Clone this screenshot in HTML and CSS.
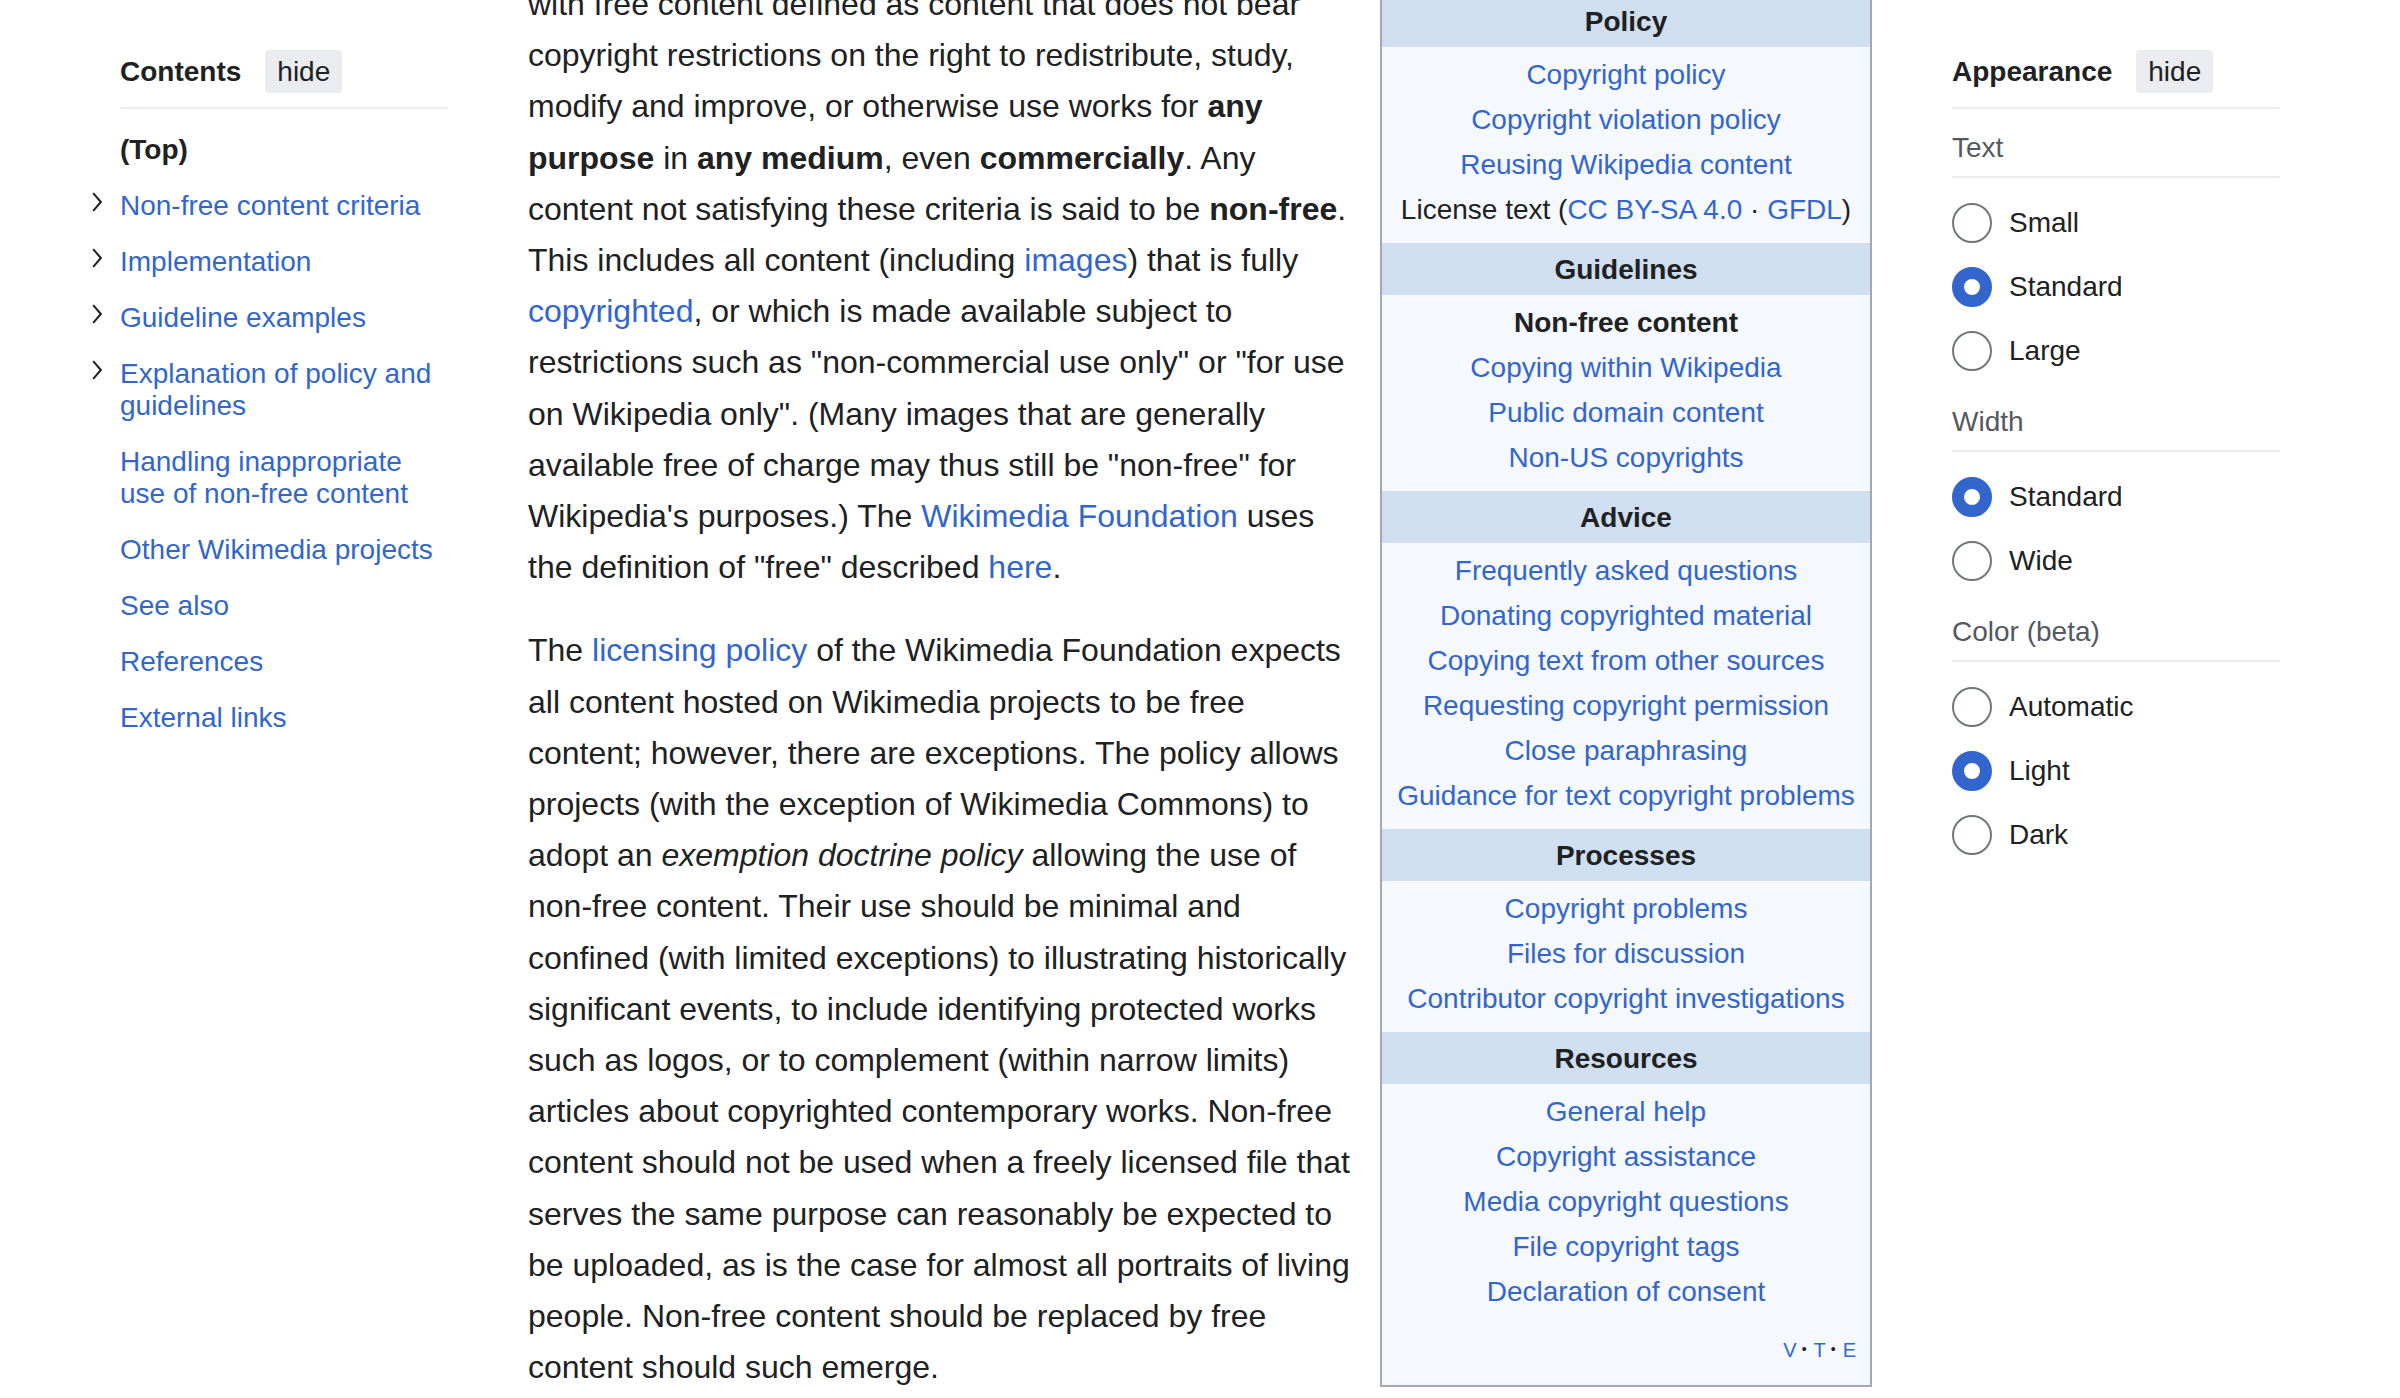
FILE: index.html
```html
<!DOCTYPE html>
<html lang="en">
<head>
<meta charset="utf-8">
<title>Non-free content</title>
<link rel="stylesheet" href="styles.css">
</head>
<body>
<div class="page">
  <nav class="toc">
    <div class="panel-head">
      <span class="panel-title">Contents</span>
      <button class="hide-btn">hide</button>
    </div>
    <ul class="toc-list">
      <li class="toc-item toc-top">(Top)</li>
      <li class="toc-item has-toggle"><span class="toc-toggle"><svg width="10" height="20" viewBox="0 0 10 20"><polyline points="1.2,1.2 8.8,10 1.2,18.8" fill="none" stroke="#202122" stroke-width="2"/></svg></span><a href="#">Non-free content criteria</a></li>
      <li class="toc-item has-toggle"><span class="toc-toggle"><svg width="10" height="20" viewBox="0 0 10 20"><polyline points="1.2,1.2 8.8,10 1.2,18.8" fill="none" stroke="#202122" stroke-width="2"/></svg></span><a href="#">Implementation</a></li>
      <li class="toc-item has-toggle"><span class="toc-toggle"><svg width="10" height="20" viewBox="0 0 10 20"><polyline points="1.2,1.2 8.8,10 1.2,18.8" fill="none" stroke="#202122" stroke-width="2"/></svg></span><a href="#">Guideline examples</a></li>
      <li class="toc-item has-toggle"><span class="toc-toggle"><svg width="10" height="20" viewBox="0 0 10 20"><polyline points="1.2,1.2 8.8,10 1.2,18.8" fill="none" stroke="#202122" stroke-width="2"/></svg></span><a href="#">Explanation of policy and guidelines</a></li>
      <li class="toc-item"><a href="#">Handling inappropriate use of non-free content</a></li>
      <li class="toc-item"><a href="#">Other Wikimedia projects</a></li>
      <li class="toc-item"><a href="#">See also</a></li>
      <li class="toc-item"><a href="#">References</a></li>
      <li class="toc-item"><a href="#">External links</a></li>
    </ul>
  </nav>

  <main class="content">
    <div class="article">
      <p>with free content defined as content that does not bear copyright restrictions on the right to redistribute, study, modify and improve, or otherwise use works for <b>any purpose</b> in <b>any medium</b>, even <b>commercially</b>. Any content not satisfying these criteria is said to be <b>non-free</b>. This includes all content (including <a href="#">images</a>) that is fully <a href="#">copyrighted</a>, or which is made available subject to restrictions such as "non-commercial use only" or "for use on Wikipedia only". (Many images that are generally available free of charge may thus still be "non-free" for Wikipedia's purposes.) The <a href="#">Wikimedia Foundation</a> uses the definition of "free" described <a href="#">here</a>.</p>
      <p>The <a href="#">licensing policy</a> of the Wikimedia Foundation expects all content hosted on Wikimedia projects to be free content; however, there are exceptions. The policy allows projects (with the exception of Wikimedia Commons) to adopt an <i>exemption doctrine policy</i> allowing the use of non-free content. Their use should be minimal and confined (with limited exceptions) to illustrating historically significant events, to include identifying protected works such as logos, or to complement (within narrow limits) articles about copyrighted contemporary works. Non-free content should not be used when a freely licensed file that serves the same purpose can reasonably be expected to be uploaded, as is the case for almost all portraits of living people. Non-free content should be replaced by free content should such emerge.</p>
    </div>

    <aside class="sidebar">
      <div class="sb-head">Policy</div>
      <div class="sb-body">
        <div><a href="#">Copyright policy</a></div>
        <div><a href="#">Copyright violation policy</a></div>
        <div><a href="#">Reusing Wikipedia content</a></div>
        <div>License text (<a href="#">CC BY-SA 4.0</a> · <a href="#">GFDL</a>)</div>
      </div>
      <div class="sb-head">Guidelines</div>
      <div class="sb-body">
        <div class="sb-sub">Non-free content</div>
        <div><a href="#">Copying within Wikipedia</a></div>
        <div><a href="#">Public domain content</a></div>
        <div><a href="#">Non-US copyrights</a></div>
      </div>
      <div class="sb-head">Advice</div>
      <div class="sb-body">
        <div><a href="#">Frequently asked questions</a></div>
        <div><a href="#">Donating copyrighted material</a></div>
        <div><a href="#">Copying text from other sources</a></div>
        <div><a href="#">Requesting copyright permission</a></div>
        <div><a href="#">Close paraphrasing</a></div>
        <div><a href="#">Guidance for text copyright problems</a></div>
      </div>
      <div class="sb-head">Processes</div>
      <div class="sb-body">
        <div><a href="#">Copyright problems</a></div>
        <div><a href="#">Files for discussion</a></div>
        <div><a href="#">Contributor copyright investigations</a></div>
      </div>
      <div class="sb-head">Resources</div>
      <div class="sb-body">
        <div><a href="#">General help</a></div>
        <div><a href="#">Copyright assistance</a></div>
        <div><a href="#">Media copyright questions</a></div>
        <div><a href="#">File copyright tags</a></div>
        <div><a href="#">Declaration of consent</a></div>
      </div>
      <div class="sb-vte"><a href="#">V</a><span class="vte-dot">•</span><a href="#">T</a><span class="vte-dot">•</span><a href="#">E</a></div>
    </aside>
  </main>

  <aside class="appearance">
    <div class="panel-head">
      <span class="panel-title">Appearance</span>
      <button class="hide-btn">hide</button>
    </div>
    <div class="ap-label">Text</div>
    <ul class="ap-options">
      <li class="ap-opt"><span class="radio"></span>Small</li>
      <li class="ap-opt"><span class="radio checked"></span>Standard</li>
      <li class="ap-opt"><span class="radio"></span>Large</li>
    </ul>
    <div class="ap-label">Width</div>
    <ul class="ap-options">
      <li class="ap-opt"><span class="radio checked"></span>Standard</li>
      <li class="ap-opt"><span class="radio"></span>Wide</li>
    </ul>
    <div class="ap-label">Color (beta)</div>
    <ul class="ap-options">
      <li class="ap-opt"><span class="radio"></span>Automatic</li>
      <li class="ap-opt"><span class="radio checked"></span>Light</li>
      <li class="ap-opt"><span class="radio"></span>Dark</li>
    </ul>
  </aside>
</div>
</body>
</html>
```

FILE: styles.css
```css
html, body {
  margin: 0;
  padding: 0;
  height: 100%;
  overflow: hidden;
  background: #ffffff;
}

body {
  font-family: "Liberation Sans", Arial, Helvetica, sans-serif;
  color: #202122;
}

a {
  color: #3366cc;
  text-decoration: none;
}

ul {
  list-style: none;
  margin: 0;
  padding: 0;
}

.page {
  display: flex;
  align-items: flex-start;
  gap: 80px;
  padding: 0 120px;
}

/* ---------- side panels ---------- */
.toc,
.appearance {
  width: 328px;
  flex: 0 0 328px;
  padding-top: 50px;
  font-size: 28px;
}

.panel-head {
  display: flex;
  align-items: center;
  gap: 24px;
  height: 43px;
  padding-bottom: 14px;
  border-bottom: 2px solid #eaecf0;
}

.panel-title {
  font-weight: 700;
  font-size: 28px;
}

.hide-btn {
  font-family: "Liberation Sans", Arial, Helvetica, sans-serif;
  font-size: 28px;
  color: #202122;
  background: #eaecf0;
  border: none;
  border-radius: 4px;
  height: 43px;
  line-height: 43px;
  padding: 0 12px;
}

/* ---------- table of contents ---------- */
.toc-list {
  padding-top: 13px;
}

.toc-item {
  display: flex;
  align-items: flex-start;
  padding: 12px 0;
  line-height: 32px;
}

.toc-top {
  font-weight: 700;
}

.toc-item.has-toggle {
  margin-left: -28px;
}

.toc-toggle {
  flex: 0 0 28px;
  height: 32px;
  display: flex;
  align-items: flex-start;
  padding-top: 2px;
  box-sizing: border-box;
}

.toc-toggle svg {
  display: block;
}

/* ---------- main content ---------- */
.content {
  width: 1344px;
  flex: 0 0 1344px;
  display: flex;
  justify-content: space-between;
  align-items: flex-start;
}

.article {
  width: 830px;
  margin-top: -21px;
  font-size: 32px;
  line-height: 51.2px;
}

.article p {
  margin: 0 0 32px;
}

/* ---------- copyright sidebar ---------- */
.sidebar {
  width: 492px;
  box-sizing: border-box;
  margin-top: -7px;
  border: 2px solid #a2a9b1;
  background: #f5f8fd;
  font-size: 28px;
  text-align: center;
}

.sb-head {
  background: #cfdff0;
  font-weight: 700;
  line-height: 45px;
  padding: 3.5px 0;
}

.sb-body {
  padding: 5px 0 11px;
  line-height: 45px;
}

.sb-sub {
  font-weight: 700;
}

.sb-vte {
  text-align: right;
  font-size: 20px;
  line-height: 20px;
  padding: 15px 14px 23px;
}

.vte-dot {
  font-size: 14px;
  margin: 0 7px 0 5px;
  position: relative;
  top: -3px;
}

/* ---------- appearance panel ---------- */
.ap-label {
  color: #54595d;
  line-height: 44px;
  padding: 17px 0 6px;
  border-bottom: 2px solid #eaecf0;
}

.ap-options {
  padding-top: 13px;
}

.ap-opt {
  display: flex;
  align-items: center;
  height: 64px;
  color: #202122;
}

.radio {
  width: 40px;
  height: 40px;
  box-sizing: border-box;
  border: 2px solid #72777d;
  border-radius: 50%;
  background: #ffffff;
  margin-right: 17px;
  flex: 0 0 40px;
}

.radio.checked {
  border: 12px solid #3366cc;
}
```
